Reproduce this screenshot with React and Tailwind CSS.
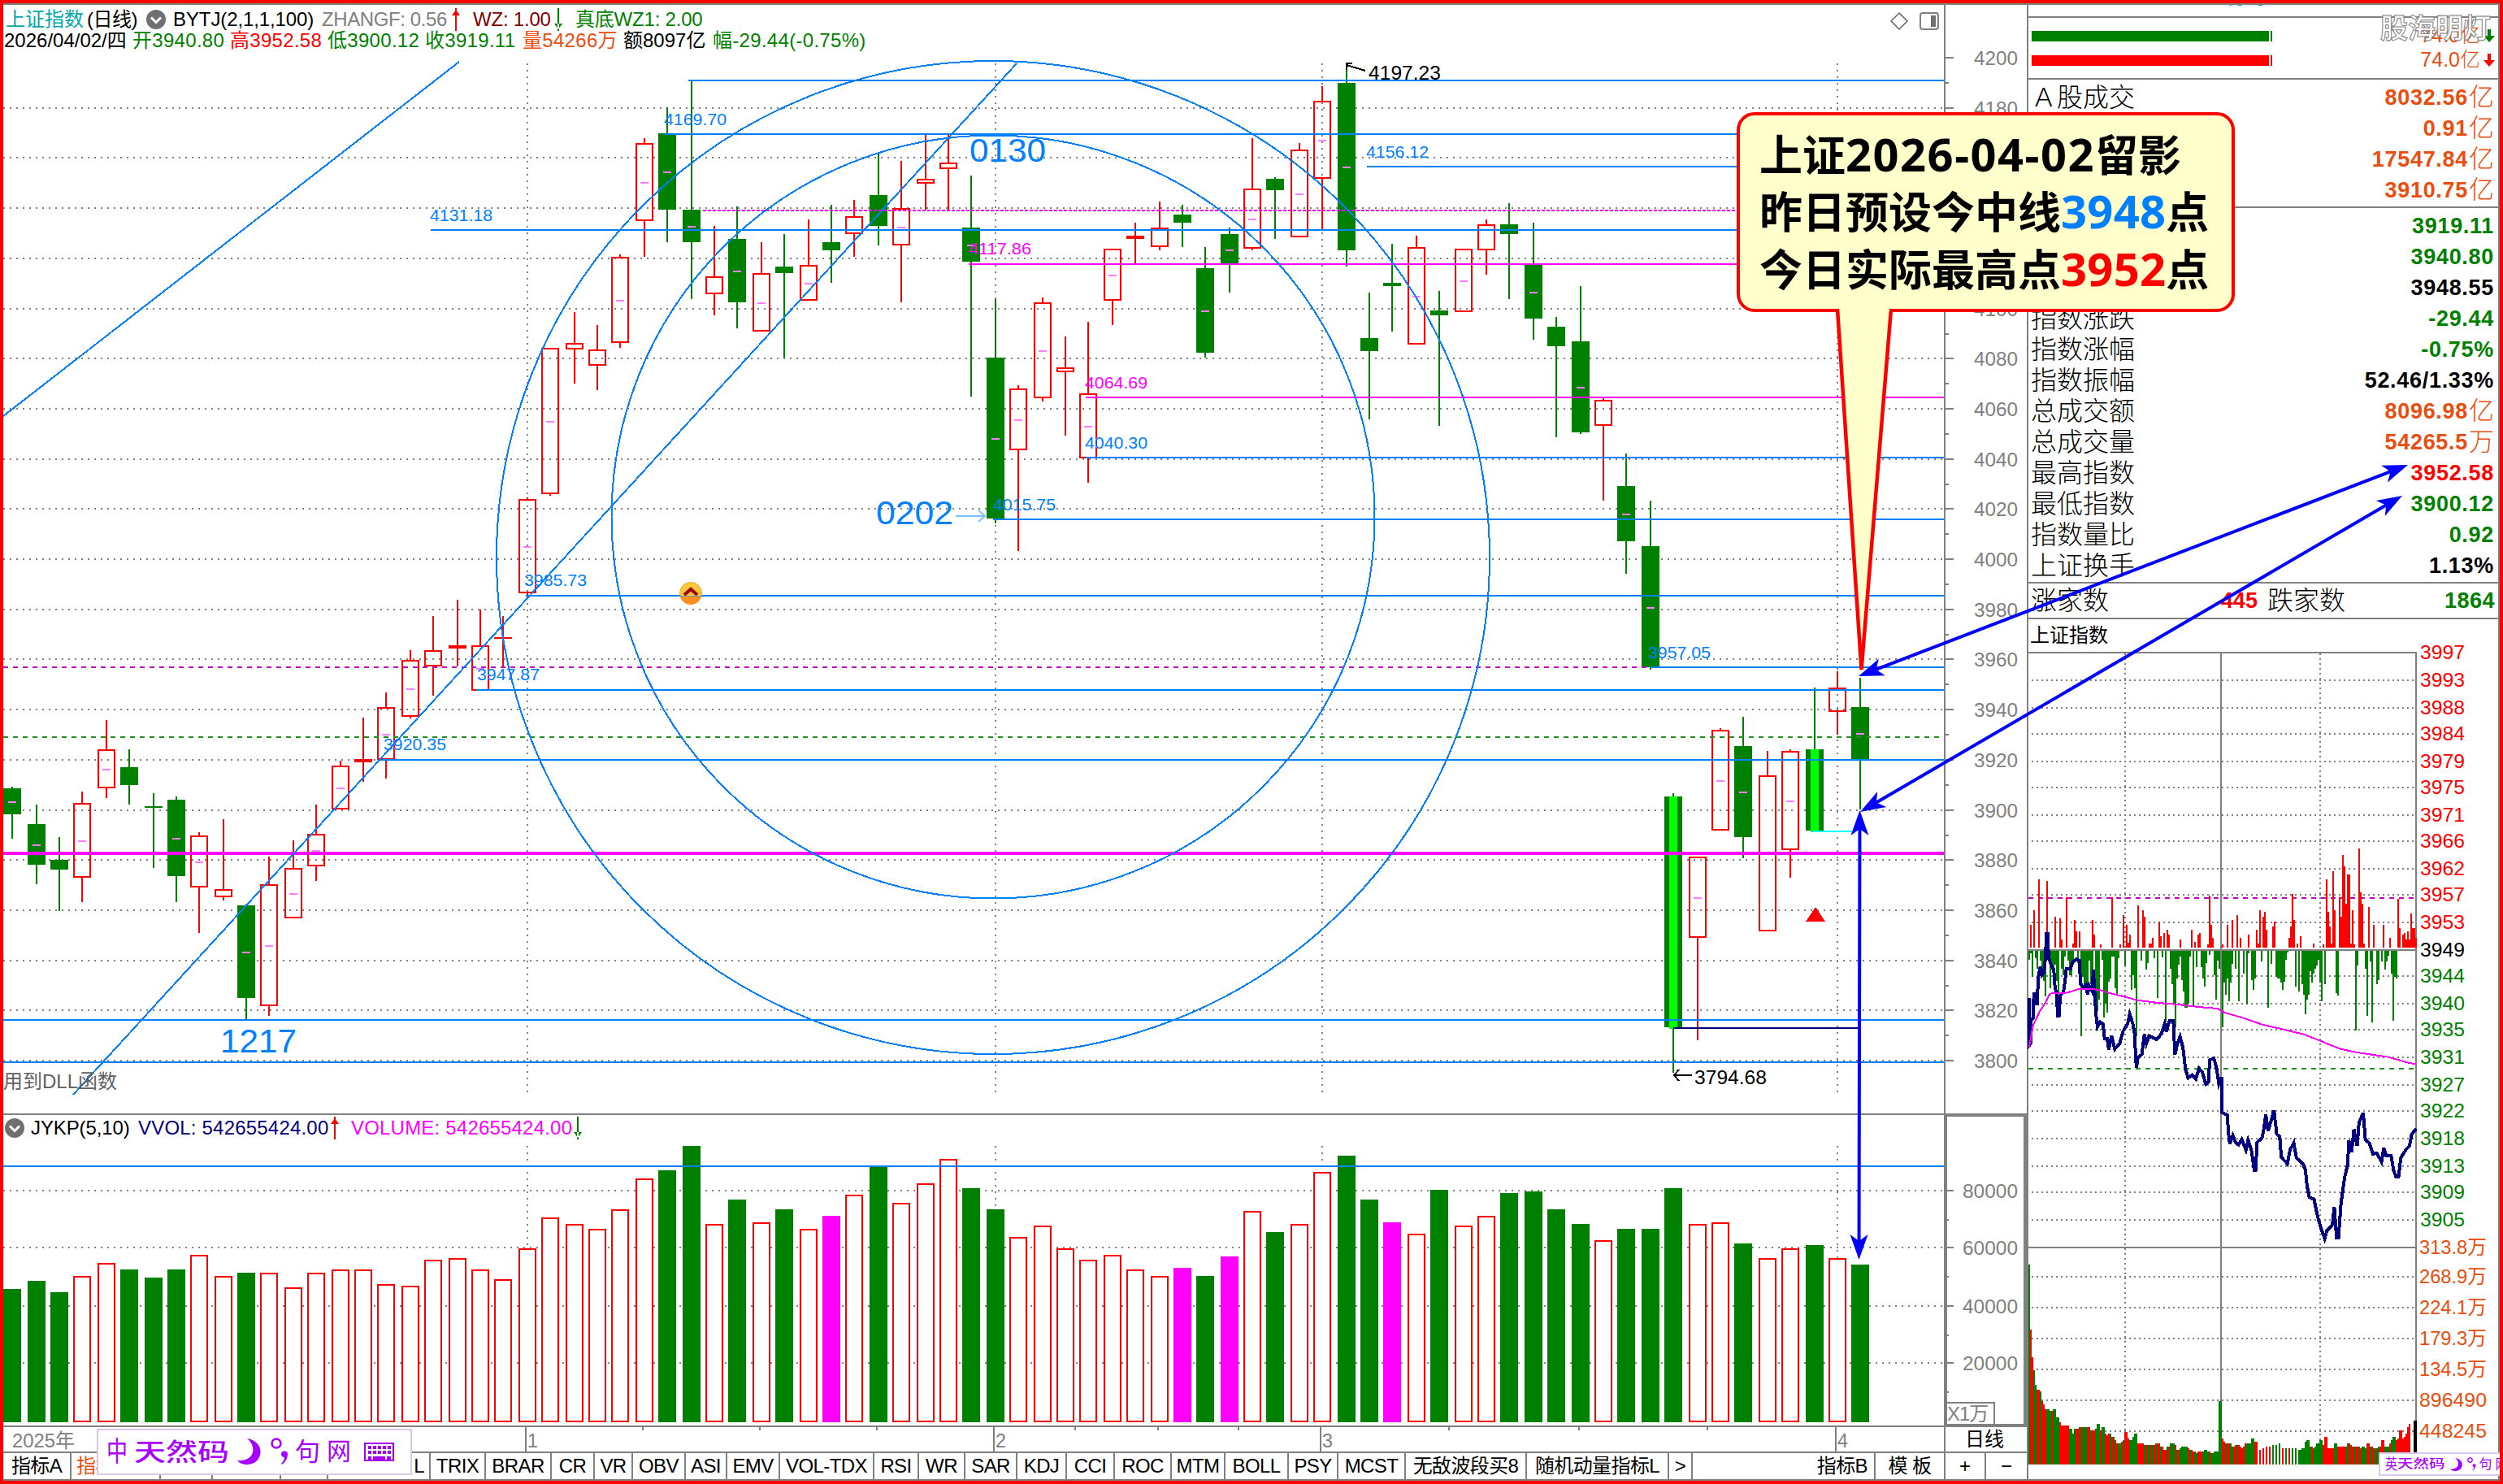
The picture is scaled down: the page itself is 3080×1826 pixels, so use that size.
import { clsx } from 'clsx';

const GRAY = '#808080';
const GREEN = '#008000';
const RED = '#ff0000';
const BLUE = '#0080ff';
const PINK = '#ff00ff';
const NAVY = '#000080';
const ORANGE = '#e84e0f';

const SANS = '"Liberation Sans", "Noto Sans CJK SC", sans-serif';

// [direction, high, body top, body bottom, low, middle mark]
const candles = [
  ['d', 968, 970, 1002, 1032, 1], ['d', 990, 1014, 1064, 1088, 1], ['d', 1030, 1058, 1070, 1121, 0],
  ['u', 974, 988, 1080, 1110, 1], ['u', 886, 922, 970, 982, 1], ['d', 922, 944, 966, 990, 0],
  ['d', 976, 992, 994, 1068, 0], ['d', 980, 984, 1078, 1110, 1], ['u', 1024, 1028, 1092, 1148, 1],
  ['u', 1008, 1094, 1104, 1108, 0], ['d', 1112, 1114, 1228, 1254, 1], ['u', 1054, 1088, 1238, 1250, 1],
  ['u', 1034, 1068, 1130, 1130, 1], ['u', 990, 1026, 1066, 1084, 1], ['u', 936, 942, 996, 996, 1],
  ['u', 883, 934, 938, 962, 0], ['u', 852, 870, 935, 958, 1], ['u', 800, 812, 882, 884, 1],
  ['u', 758, 800, 820, 856, 0], ['u', 738, 794, 798, 820, 0], ['u', 750, 794, 850, 850, 1],
  ['u', 758, 784, 786, 822, 0], ['u', 612, 614, 730, 736, 1], ['u', 428, 428, 608, 610, 1],
  ['u', 384, 422, 430, 472, 0], ['u', 400, 430, 450, 480, 0], ['u', 313, 316, 422, 428, 1],
  ['u', 170, 176, 272, 316, 1], ['d', 132, 164, 258, 298, 1], ['d', 99, 258, 298, 368, 1],
  ['u', 278, 340, 362, 388, 0], ['d', 254, 294, 372, 404, 1], ['u', 298, 336, 408, 408, 1],
  ['d', 288, 328, 336, 440, 0], ['u', 270, 326, 370, 370, 1], ['d', 252, 298, 308, 348, 0],
  ['u', 246, 266, 288, 316, 0], ['d', 189, 240, 278, 302, 0], ['u', 198, 256, 302, 372, 1],
  ['u', 166, 220, 226, 258, 0], ['u', 166, 200, 208, 258, 0], ['d', 216, 280, 322, 488, 1],
  ['d', 368, 440, 638, 644, 1], ['u', 474, 478, 554, 678, 1], ['u', 366, 372, 490, 494, 1],
  ['u', 414, 452, 458, 536, 0], ['u', 396, 484, 564, 594, 1], ['u', 306, 306, 370, 400, 1],
  ['u', 274, 290, 294, 325, 0], ['u', 248, 280, 304, 308, 0], ['d', 252, 264, 274, 304, 0],
  ['d', 304, 330, 434, 440, 1], ['d', 280, 288, 325, 360, 1], ['u', 170, 232, 306, 308, 1],
  ['d', 218, 220, 234, 294, 0], ['u', 176, 184, 292, 292, 1], ['u', 106, 124, 220, 283, 1],
  ['d', 84, 102, 308, 328, 1], ['d', 360, 416, 432, 516, 0], ['d', 300, 348, 352, 408, 0],
  ['u', 290, 304, 424, 424, 1], ['d', 358, 382, 388, 524, 0], ['u', 306, 306, 384, 384, 1],
  ['u', 270, 276, 308, 338, 0], ['d', 250, 276, 288, 368, 0], ['d', 274, 325, 392, 418, 1],
  ['d', 390, 402, 426, 538, 0], ['d', 352, 420, 532, 534, 1], ['u', 489, 492, 524, 616, 0],
  ['d', 558, 598, 666, 706, 1], ['d', 616, 672, 821, 824, 1], ['x', 976, 980, 1264, 1320, 0],
  ['u', 1054, 1054, 1154, 1280, 1], ['u', 896, 898, 1022, 1022, 1], ['d', 882, 918, 1030, 1056, 1],
  ['u', 924, 954, 1146, 1146, 0], ['u', 922, 924, 1046, 1080, 1], ['x', 846, 922, 1022, 1024, 0],
  ['u', 826, 846, 876, 904, 0], ['d', 834, 870, 934, 996, 1],
];

// volume bar tops, one for each candle
const volumes = [
  1586, 1576, 1590, 1570, 1554, 1562, 1572, 1562, 1544, 1570, 1566, 1566, 1584, 1566, 1562, 1562,
  1580, 1582, 1550, 1548, 1562, 1574, 1536, 1498, 1506, 1512, 1488, 1450, 1440, 1410, 1506, 1476,
  1504, 1488, 1512, 1496, 1470, 1436, 1480, 1456, 1426, 1462, 1488, 1522, 1508, 1536, 1550, 1544,
  1562, 1570, 1560, 1570, 1546, 1490, 1516, 1506, 1442, 1422, 1476, 1504, 1518, 1464, 1508, 1496,
  1468, 1466, 1488, 1506, 1526, 1512, 1512, 1462, 1506, 1504, 1530, 1548, 1536, 1532, 1548, 1556,
];
const volumeColors =
  'GGGRRGGGRRGRRRRRRRRRRRRRRRRRGGRGRGRMRGRRRGGRRRRRRRMGMRGRRGGMRGRRGGGGRGGGRRGRRGRG';

const candleX = (i) => Math.round((14.3 + i * 28.79) / 2) * 2 + 1;
const months = [649, 1225, 1627, 2261];

const levels = [
  { y: 99, x: 847 },
  { y: 165, x: 818, label: '4169.70', lx: 817, ly: 154 },
  { y: 283, x: 530, label: '4131.18', lx: 529, ly: 272 },
  { y: 205, x: 1682, label: '4156.12', lx: 1681, ly: 194 },
  { y: 325, x: 1192, label: '4117.86', lx: 1192, ly: 313, pink: true },
  { y: 489, x: 1336, label: '4064.69', lx: 1335, ly: 478, pink: true },
  { y: 563, x: 1336, label: '4040.30', lx: 1335, ly: 552 },
  { y: 639, x: 1222, label: '4015.75', lx: 1222, ly: 628 },
  { y: 733, x: 647, label: '3985.73', lx: 645, ly: 721 },
  { y: 849, x: 586, label: '3947.87', lx: 587, ly: 837 },
  { y: 935, x: 470, label: '3920.35', lx: 472, ly: 923 },
  { y: 821, x: 2031, label: '3957.05', lx: 2028, ly: 810 },
  { y: 1255, x: 4 },
  { y: 1307, x: 4 },
];

const priceTicks = Array.from({ length: 21 }, (_, i) => 4200 - i * 20);
const priceY = (p) => 71 + (4200 - p) * 3.085;

function Candle({ i, data }) {
  const [kind, high, top, bottom, low, mark] = data;
  const x = candleX(i);
  const up = kind === 'u';
  const color = up ? RED : GREEN;
  const h = Math.max(bottom - top, 2);
  return (
    <g>
      <rect x={x - 1} y={high} width="2" height={top - high} fill={color} />
      <rect x={x - 1} y={bottom} width="2" height={low - bottom} fill={color} />
      {up && h > 4 ? (
        <rect x={x - 10} y={top + 1} width="20" height={h - 2} fill="none" stroke={RED} strokeWidth="2" />
      ) : (
        <rect x={x - 11} y={top} width="22" height={h} fill={color} />
      )}
      {kind === 'x' && <rect x={x - 5} y={top} width="10" height={h + 2} fill="#00ff00" />}
      {mark === 1 && (
        <rect x={x - 5} y={(top + bottom) / 2} width="10" height="2" fill="#ff80ff" />
      )}
    </g>
  );
}

function Label({ x, y, w, size = 24, fill = GRAY, children }) {
  return (
    <text x={x} y={y} fontSize={size} fill={fill} textLength={w} lengthAdjust="spacingAndGlyphs">
      {children}
    </text>
  );
}

function PriceChart() {
  return (
    <svg width="2388" height="1306" viewBox="4 64 2388 1306" fontFamily={SANS} shapeRendering="crispEdges">
      {priceTicks.slice(1).map((p) => (
        <line key={p} x1="4" x2="2392" y1={Math.round(priceY(p))} y2={Math.round(priceY(p))} stroke={GRAY} strokeWidth="2" strokeDasharray="2 6" />
      ))}
      {months.map((x) => (
        <line key={x} x1={x} x2={x} y1="78" y2="1345" stroke={GRAY} strokeWidth="2" strokeDasharray="2 6" />
      ))}
      {candles.map((c, i) => (
        <Candle key={i} i={i} data={c} />
      ))}
      <line x1="4" x2="2026" y1="821" y2="821" stroke="#c000c0" strokeWidth="2" strokeDasharray="6 6" />
      <line x1="4" x2="2392" y1="907" y2="907" stroke="#209020" strokeWidth="2" strokeDasharray="6 6" />
      <line x1="865" x2="2392" y1="259" y2="259" stroke={PINK} strokeWidth="2" strokeDasharray="4 2" />
      <line x1="4" x2="2392" y1="1050" y2="1050" stroke={PINK} strokeWidth="4" />
      {levels.map((l) => (
        <g key={l.y}>
          <line x1={l.x} x2="2392" y1={l.y} y2={l.y} stroke={l.pink ? PINK : BLUE} strokeWidth="2" />
          {l.label && (
            <Label x={l.lx} y={l.ly} w={77} size={21} fill={l.pink ? PINK : BLUE}>
              {l.label}
            </Label>
          )}
        </g>
      ))}
      <line x1="2059" x2="2287" y1="1265" y2="1265" stroke={NAVY} strokeWidth="2" />
      <line x1="2230" x2="2280" y1="1023" y2="1023" stroke="#00ffff" strokeWidth="2" />
      <g fill="none" stroke={BLUE} strokeWidth="2">
        <circle cx="1222" cy="686" r="611" />
        <circle cx="1222" cy="636" r="469.5" />
        <line x1="4" y1="512" x2="565" y2="76" />
        <line x1="90" y1="1347" x2="1251" y2="78" />
      </g>
      <path d="M2234 1116L2246 1134H2222Z" fill={RED} />

      {/* sell signal */}
      <g shapeRendering="auto">
        <circle cx="850" cy="730" r="13.5" fill="#ffc83c" stroke="#f0a020" />
        <path d="M838 734a12 10 0 0 0 24 0Z" fill="#ff9020" />
        <path d="M842 732l8-7 8 7" fill="none" stroke="#a00000" strokeWidth="4" />
      </g>
      <line x1="837" x2="863" y1="733" y2="733" stroke={BLUE} strokeWidth="1" opacity="0.6" />

      <Label x={1193} y={199} w={94} size={40} fill={BLUE}>0130</Label>
      <Label x={1078} y={645} w={95} size={40} fill={BLUE}>0202</Label>
      <Label x={271} y={1295} w={94} size={40} fill={BLUE}>1217</Label>
      <path d="M1176 635H1211M1204 628L1212 635L1204 642" fill="none" stroke="#80c0ff" strokeWidth="2" shapeRendering="auto" />

      <Label x={1684} y={98} w={89} fill="#000">4197.23</Label>
      <path d="M1680 87L1657 80M1657 86V78H1664" fill="none" stroke="#000" strokeWidth="2" />
      <Label x={2085} y={1334} w={89} fill="#000">3794.68</Label>
      <path d="M2082 1323H2060M2066 1316L2060 1323L2066 1330" fill="none" stroke="#000" strokeWidth="2" />
      <Label x={4} y={1339} w={140} fill="#606060">用到DLL函数</Label>
    </svg>
  );
}

function PriceAxis() {
  return (
    <svg width="100" height="1364" viewBox="2394 6 100 1364" fontFamily={SANS} shapeRendering="crispEdges">
      {priceTicks.map((p) => {
        const y = Math.round(priceY(p));
        return (
          <g key={p}>
            <rect x="2394" y={y - 1} width="10" height="2" fill={GRAY} />
            {p > 3800 && <rect x="2394" y={y + 30} width="4" height="2" fill={GRAY} />}
            <Label x={2429} y={y + 9} w={54}>{p}</Label>
          </g>
        );
      })}
    </svg>
  );
}

const volumeTicks = [
  [80000, 1465],
  [60000, 1535],
  [40000, 1607],
  [20000, 1677],
];

function VolumeChart() {
  return (
    <svg width="2388" height="348" viewBox="4 1406 2388 348" shapeRendering="crispEdges">
      {volumeTicks.map(([v, y]) => (
        <line key={v} x1="4" x2="2392" y1={y} y2={y} stroke={GRAY} strokeWidth="2" strokeDasharray="2 6" />
      ))}
      {months.map((x) => (
        <line key={x} x1={x} x2={x} y1="1410" y2="1750" stroke={GRAY} strokeWidth="2" strokeDasharray="2 6" />
      ))}
      {volumes.map((top, i) => {
        const x = candleX(i);
        const c = volumeColors[i];
        if (c === 'R') {
          return (
            <rect key={i} x={x - 10} y={top + 1} width="20" height={1748 - top} fill="#fff" stroke={RED} strokeWidth="2" />
          );
        }
        return <rect key={i} x={x - 11} y={top} width="22" height={1750 - top} fill={c === 'G' ? GREEN : PINK} />;
      })}
      <line x1="4" x2="2392" y1="1435" y2="1435" stroke={BLUE} strokeWidth="2" />
    </svg>
  );
}

function VolumeAxis() {
  return (
    <div className="box-border flex h-[386px] w-[102px] flex-col border-4 border-[#808080]">
      <svg width="94" height="351" viewBox="2396 1374 94 351" fontFamily={SANS} shapeRendering="crispEdges">
        {volumeTicks.map(([v, y]) => (
          <g key={v}>
            <rect x="2396" y={y - 1} width="8" height="2" fill={GRAY} />
            <rect x="2396" y={y + 35} width="2" height="2" fill={GRAY} />
            <Label x={2415} y={y + 9} w={68}>{v}</Label>
          </g>
        ))}
      </svg>
      <div className="flex h-[27px] w-[59px] items-center overflow-hidden border-t-2 border-r-2 border-[#808080] text-2xl leading-none tracking-[-1px] text-[#808080]">
        X1万
      </div>
    </div>
  );
}

function DropIcon() {
  return (
    <svg className="shrink-0" width="24" height="24" viewBox="0 0 24 24">
      <circle cx="12" cy="12" r="12" fill="#707070" />
      <path d="M6 9.500L12 15.500L18 9.500" fill="none" stroke="#fff" strokeWidth="3" />
    </svg>
  );
}

function Trend({ up }) {
  return up ? (
    <svg className="shrink-0" width="20" height="28" viewBox="0 0 20 28">
      <path d="M9 0h2v28H9zM5 9L10 2L15 9z" fill={RED} />
    </svg>
  ) : (
    <svg className="shrink-0" width="20" height="28" viewBox="0 0 20 28">
      <path d="M9 0h2v28H9zM5 19L10 26L15 19z" fill={GREEN} />
    </svg>
  );
}

function ChartHeader() {
  return (
    <div className="flex h-[58px] flex-col whitespace-nowrap text-2xl leading-none">
      <div className="flex h-8 items-center pt-1 pl-[3px]">
        <span className="w-[100px] text-[#00a8a8]">上证指数</span>
        <span className="w-[73px] tracking-[-0.5px]">(日线)</span>
        <DropIcon />
        <span className="ml-[9px] w-[183px] tracking-[-0.1px]">BYTJ(2,1,1,100)</span>
        <span className="w-[155px] tracking-[-0.400px] text-[#808080]">ZHANGF: 0.56</span>
        <Trend up />
        <span className="ml-[11px] w-[95px] tracking-[-0.2px] text-[#800000]">WZ: 1.00</span>
        <Trend />
        <span className="ml-[11px] tracking-[-0.2px] text-[#008000]">真底WZ1: 2.00</span>
      </div>
      <div className="flex h-6 items-center pl-[1px]">
        <span className="w-[158px]">2026/04/02/四</span>
        <span className="w-[120px] tracking-[0.3px] text-[#008000]">开3940.80</span>
        <span className="w-[120px] tracking-[0.3px] text-[#ff0000]">高3952.58</span>
        <span className="w-[120px] tracking-[0.3px] text-[#008000]">低3900.12</span>
        <span className="w-[120px] tracking-[0.3px] text-[#008000]">收3919.11</span>
        <span className="w-[124px] tracking-[0.3px] text-[#e84e0f]">量54266万</span>
        <span className="w-[110px]">额8097亿</span>
        <span className="tracking-[0.3px] text-[#008000]">幅-29.44(-0.75%)</span>
      </div>
    </div>
  );
}

function VolumeHeader() {
  return (
    <div className="flex h-[34px] items-center whitespace-nowrap pb-[2px] pl-[2px] text-2xl leading-none">
      <DropIcon />
      <span className="ml-2 w-[132px] tracking-[-0.1px]">JYKP(5,10)</span>
      <span className="w-[232px] tracking-[0.2px] text-[#000080]">VVOL: 542655424.00</span>
      <Trend up />
      <span className="ml-[10px] w-[269px] tracking-[0.2px] text-[#ff00ff]">VOLUME: 542655424.00</span>
      <Trend />
    </div>
  );
}

function TimeAxis() {
  const minor = [791, 935, 1079, 1323, 1425, 1524, 1783, 1943, 2101];
  return (
    <svg width="2388" height="30" viewBox="4 1756 2388 30" fontFamily={SANS} shapeRendering="crispEdges">
      <Label x={15} y={1781} w={77}>2025年</Label>
      {months.map((x, i) => (
        <g key={x}>
          <rect x={x - 3} y="1756" width="2" height="30" fill={GRAY} />
          <Label x={x} y={1781} w={13}>{i + 1}</Label>
        </g>
      ))}
      {minor.map((x) => (
        <rect key={x} x={x - 1} y="1756" width="2" height="4" fill={GRAY} />
      ))}
    </svg>
  );
}

const tabs = [
  ['指标A', 'w-[84px]'], ['指标', 'w-[110px]', 'text-[#e84e0f] justify-start pl-1.5'], ['', 'w-[64px]'], ['', 'w-[84px]'], ['', 'w-[58px]'],
  ['L', 'w-[126px]', 'justify-end pr-1.5'], ['TRIX', 'w-[68px]'], ['BRAR', 'w-[81px]'], ['CR', 'w-[53px]'],
  ['VR', 'w-[47px]'], ['OBV', 'w-[65px]'], ['ASI', 'w-[51px]'], ['EMV', 'w-[65px]'], ['VOL-TDX', 'w-[116px]'],
  ['RSI', 'w-[55px]'], ['WR', 'w-[57px]'], ['SAR', 'w-[64px]'], ['KDJ', 'w-[61px]'], ['CCI', 'w-[59px]'],
  ['ROC', 'w-[70px]'], ['MTM', 'w-[66px]'], ['BOLL', 'w-[78px]'], ['PSY', 'w-[61px]'], ['MCST', 'w-[83px]'],
  ['无敌波段买8', 'w-[149px]'], ['随机动量指标L', 'w-[175px]'], ['>', 'w-[29px]'],
];

function IndicatorTabs() {
  return (
    <div className="flex h-8 whitespace-nowrap text-2xl leading-none tracking-[-0.6px]">
      {tabs.map(([name, width, extra], i) => (
        <div key={i} className={clsx('flex shrink-0 items-center border-r-2 border-[#808080]', width, extra || 'justify-center')}>
          {name}
        </div>
      ))}
      <div className="flex flex-1 items-center justify-end border-r-2 border-[#808080] pr-2">指标B</div>
      <div className="flex w-[84px] items-center justify-center">模 板</div>
    </div>
  );
}

const quotes = [
  ['', '3919.11', 'text-[#008000]'],
  ['', '3940.80', 'text-[#008000]'],
  ['', '3948.55', 'text-black'],
  ['指数涨跌', '-29.44', 'text-[#008000]'],
  ['指数涨幅', '-0.75%', 'text-[#008000]'],
  ['指数振幅', '52.46/1.33%', 'text-black'],
  ['总成交额', '8096.98', 'text-[#e84e0f]', '亿'],
  ['总成交量', '54265.5', 'text-[#e84e0f]', '万'],
  ['最高指数', '3952.58', 'text-[#ff0000]'],
  ['最低指数', '3900.12', 'text-[#008000]'],
  ['指数量比', '0.92', 'text-[#008000]'],
  ['上证换手', '1.13%', 'text-black'],
];

const turnover = [
  ['Ａ股成交', '8032.56', 'text-[#e84e0f]', '亿'],
  ['', '0.91', 'text-[#e84e0f]', '亿'],
  ['', '17547.84', 'text-[#e84e0f]', '亿'],
  ['', '3910.75', 'text-[#e84e0f]', '亿'],
];

function QuoteRow({ row }) {
  const [name, value, color, unit] = row;
  return (
    <div className="flex h-[38px] items-center justify-between pr-[5px] pl-[3px]">
      <span className="text-[32px] font-light">{name}</span>
      <span className={clsx('flex items-center', color)}>
        <b className="text-[27px] tracking-[0.7px]">{value}</b>
        {unit && <span className="ml-px text-[31px] font-light">{unit}</span>}
      </span>
    </div>
  );
}

function FlowBar({ fill, arrow }) {
  return (
    <div className="flex h-[30px] items-center pl-1">
      <div className={clsx('h-[13px] w-[292px]', fill)} />
      <div className={clsx('ml-[2px] h-[13px] w-[2px]', fill)} />
      <span className="ml-auto text-[25px] font-light text-[#e84e0f]">74.0亿</span>
      <svg className="mr-1 ml-1" width="14" height="18" viewBox="0 0 14 18">
        <path d="M5 1h4v8h5l-7 8-7-8h5z" fill={arrow} />
      </svg>
    </div>
  );
}

// the intraday lists hold positions on a finer grid than the panel's pixels
const mx = (v) => v / 2.529 + 2460;
const my = (v) => v / 2.063 + 780;

const inflow = [
  98, 739, 108, 701, 123, 623, 149, 627, 174, 718, 190, 722, 195, 776, 209, 668, 230, 787, 235, 726, 240, 755,
  250, 755, 290, 726, 295, 763, 316, 789, 351, 668, 378, 789, 386, 714, 397, 739, 402, 783, 407, 763, 432, 689,
  447, 701, 452, 718, 468, 785, 473, 785, 478, 772, 498, 730, 504, 767, 514, 759, 523, 751, 528, 763, 564, 776,
  600, 751, 609, 781, 619, 763, 625, 759, 650, 789, 655, 664, 660, 739, 665, 772, 695, 789, 710, 739, 725, 726,
  740, 714, 751, 772, 776, 763, 801, 751, 806, 785, 811, 701, 821, 718, 827, 706, 832, 751, 852, 743, 857, 730,
  902, 772, 907, 743, 913, 660, 918, 726, 928, 785, 938, 767, 978, 785, 1009, 789, 1020, 623, 1025, 706, 1030, 743,
  1035, 785, 1040, 602, 1045, 701, 1060, 668, 1065, 718, 1070, 561, 1075, 590, 1080, 685, 1085, 611, 1090, 611,
  1095, 785, 1101, 701, 1106, 789, 1120, 545, 1125, 656, 1130, 685, 1135, 785, 1151, 693, 1165, 739, 1196, 739,
  1216, 772, 1241, 673, 1246, 747, 1257, 763, 1262, 759, 1267, 776, 1272, 755, 1277, 776, 1283, 710, 1288, 747,
  1293, 747, 1297, 772,
];

const outflow = [
  93, 828, 98, 810, 103, 870, 113, 824, 118, 849, 128, 830, 133, 870, 139, 880, 144, 920, 154, 830, 159, 899,
  164, 845, 169, 870, 174, 840, 179, 880, 184, 911, 194, 849, 200, 866, 205, 820, 215, 830, 220, 866, 225, 866,
  230, 830, 245, 835, 255, 1022, 260, 870, 265, 895, 270, 890, 275, 890, 280, 830, 285, 890, 290, 895, 300, 911,
  305, 957, 311, 928, 321, 828, 326, 974, 331, 936, 336, 961, 341, 882, 346, 874, 351, 820, 356, 820, 361, 899,
  366, 915, 371, 824, 391, 841, 412, 903, 417, 866, 422, 899, 427, 1022, 442, 830, 457, 853, 462, 835, 483, 824,
  493, 924, 508, 822, 518, 986, 533, 849, 538, 890, 543, 936, 548, 998, 553, 874, 558, 840, 563, 820, 568, 878,
  573, 907, 578, 948, 583, 948, 588, 936, 594, 820, 604, 944, 614, 845, 629, 845, 634, 874, 639, 895, 645, 835,
  655, 815, 670, 866, 675, 928, 680, 830, 685, 849, 690, 900, 695, 998, 700, 886, 705, 915, 710, 874, 715, 932,
  720, 886, 725, 837, 735, 849, 746, 932, 761, 862, 771, 940, 776, 810, 786, 878, 791, 903, 796, 874, 817, 832,
  837, 948, 847, 837, 862, 870, 867, 874, 872, 874, 877, 886, 882, 903, 887, 882, 892, 828, 897, 808, 922, 895,
  933, 907, 943, 890, 948, 915, 953, 965, 958, 928, 963, 915, 968, 857, 973, 886, 978, 862, 983, 849, 988, 841,
  993, 828, 998, 886, 1003, 932, 1014, 890, 1050, 911, 1055, 919, 1110, 1006, 1115, 841, 1141, 849, 1146, 969,
  1156, 832, 1161, 986, 1176, 890, 1181, 878, 1191, 832, 1201, 853, 1206, 832, 1211, 816, 1221, 862, 1226, 981,
  1231, 870, 1236, 874,
];

const indexLine = [
  93, 925, 94, 1044, 98, 1040, 99, 980, 106, 975, 108, 910, 113, 938, 118, 938, 122, 872, 128, 845, 133, 866,
  139, 860, 144, 824, 147, 762, 151, 762, 154, 822, 164, 845, 170, 852, 174, 900, 179, 910, 182, 970, 186, 970,
  190, 918, 200, 910, 205, 882, 209, 849, 222, 849, 230, 832, 240, 826, 250, 830, 253, 888, 262, 897, 270, 890,
  275, 915, 280, 893, 290, 908, 293, 852, 297, 905, 301, 962, 306, 998, 314, 985, 323, 990, 328, 1027, 336, 1027,
  341, 1055, 350, 1020, 360, 1054, 375, 1040, 386, 1008, 400, 990, 406, 965, 416, 990, 421, 1012, 427, 1102,
  432, 1075, 444, 1068, 452, 1015, 458, 1040, 467, 1020, 490, 1030, 505, 1015, 515, 990, 520, 1010, 530, 982,
  542, 982, 547, 1068, 555, 1040, 563, 1022, 572, 1050, 580, 1105, 588, 1127, 600, 1120, 612, 1130, 622, 1103,
  632, 1112, 643, 1143, 652, 1137, 655, 1082, 668, 1077, 676, 1100, 684, 1142, 692, 1125, 693, 1215, 710, 1222,
  714, 1270, 718, 1295, 727, 1273, 735, 1290, 745, 1297, 755, 1283, 768, 1310, 775, 1285, 785, 1310, 794, 1362,
  798, 1362, 803, 1290, 818, 1280, 823, 1260, 830, 1220, 837, 1262, 845, 1240, 855, 1209, 864, 1270, 873, 1276,
  878, 1328, 897, 1345, 905, 1310, 917, 1292, 925, 1330, 945, 1345, 953, 1360, 958, 1400, 965, 1430, 980, 1435,
  990, 1475, 1000, 1505, 1013, 1535, 1020, 1515, 1037, 1500, 1043, 1455, 1050, 1533, 1056, 1533, 1064, 1445,
  1075, 1380, 1085, 1345, 1088, 1285, 1097, 1315, 1104, 1258, 1114, 1300, 1120, 1240, 1133, 1216, 1140, 1285,
  1152, 1292, 1163, 1320, 1175, 1318, 1190, 1340, 1197, 1305, 1205, 1325, 1220, 1325, 1227, 1360, 1235, 1378,
  1243, 1378, 1250, 1330, 1265, 1310, 1277, 1300, 1284, 1270, 1298, 1256,
];

const averageLine = [
  93, 1050, 98, 1030, 105, 995, 125, 960, 145, 935, 155, 917, 165, 911, 210, 911, 250, 901, 310, 903, 340, 911,
  390, 921, 430, 930, 500, 937, 560, 941, 620, 947, 680, 951, 700, 961, 760, 975, 820, 992, 880, 1003, 950, 1017,
  1000, 1033, 1060, 1053, 1110, 1062, 1210, 1074, 1280, 1090, 1298, 1091,
];

const minuteVolume = [
  [262, 168, 'G'], [266, 408, 'R'], [270, 510, 'R'], [275, 558, 'G'], [280, 612, 'G'], [284, 630, 'R'], [289, 630, 'R'],
  [293, 636, 'G'], [298, 672, 'R'], [302, 684, 'R'], [307, 702, 'R'], [311, 702, 'G'], [316, 702, 'G'], [320, 708, 'G'],
  [325, 708, 'R'], [329, 702, 'G'], [334, 702, 'G'], [338, 732, 'G'], [343, 732, 'G'], [347, 750, 'R'], [352, 762, 'R'],
  [356, 762, 'R'], [361, 762, 'R'], [365, 762, 'R'], [370, 762, 'R'], [374, 774, 'G'], [379, 774, 'G'], [383, 792, 'G'],
  [388, 774, 'G'], [392, 774, 'R'], [397, 774, 'R'], [401, 768, 'G'], [406, 768, 'R'], [410, 768, 'G'], [415, 768, 'G'],
  [419, 768, 'G'], [424, 768, 'R'], [428, 768, 'R'], [433, 780, 'G'], [437, 780, 'R'], [442, 780, 'R'], [446, 774, 'G'],
  [450, 756, 'G'], [455, 756, 'G'], [459, 780, 'R'], [464, 768, 'G'], [468, 768, 'G'], [473, 792, 'R'], [477, 798, 'R'],
  [482, 792, 'R'], [486, 792, 'G'], [491, 804, 'R'], [495, 804, 'G'], [500, 816, 'R'], [504, 828, 'R'], [509, 828, 'G'],
  [513, 828, 'G'], [518, 822, 'R'], [522, 816, 'G'], [527, 786, 'R'], [531, 786, 'R'], [536, 810, 'R'], [540, 816, 'G'],
  [545, 816, 'G'], [549, 804, 'G'], [554, 792, 'G'], [558, 792, 'G'], [563, 828, 'R'], [567, 828, 'R'], [572, 828, 'R'],
  [576, 828, 'R'], [581, 834, 'G'], [585, 834, 'R'], [590, 834, 'G'], [594, 834, 'G'], [599, 834, 'R'], [603, 834, 'G'],
  [608, 834, 'R'], [612, 828, 'G'], [617, 828, 'R'], [621, 828, 'R'], [626, 840, 'G'], [630, 840, 'R'], [635, 852, 'R'],
  [639, 852, 'R'], [644, 840, 'G'], [648, 840, 'R'], [653, 828, 'G'], [657, 828, 'G'], [662, 828, 'G'], [666, 834, 'R'],
  [671, 852, 'G'], [675, 852, 'R'], [680, 846, 'G'], [684, 840, 'G'], [689, 840, 'G'], [693, 840, 'G'], [698, 840, 'G'],
  [702, 846, 'R'], [707, 852, 'G'], [711, 852, 'R'], [716, 858, 'R'], [720, 858, 'G'], [725, 864, 'G'], [729, 858, 'R'],
  [734, 858, 'R'], [738, 858, 'R'], [743, 858, 'G'], [747, 852, 'G'], [752, 852, 'G'], [756, 858, 'G'], [761, 858, 'R'],
  [765, 864, 'G'], [770, 864, 'G'], [774, 858, 'G'], [779, 858, 'G'], [783, 858, 'G'], [788, 672, 'G'], [792, 672, 'G'],
  [797, 810, 'R'], [801, 822, 'R'], [806, 828, 'G'], [810, 828, 'R'], [815, 828, 'R'], [819, 828, 'G'], [824, 840, 'G'],
  [828, 840, 'R'], [833, 834, 'R'], [837, 834, 'G'], [842, 834, 'R'], [846, 840, 'R'], [851, 846, 'R'], [855, 840, 'G'],
  [860, 828, 'R'], [864, 828, 'G'], [869, 828, 'G'], [873, 828, 'G'], [878, 810, 'G'], [882, 810, 'G'], [887, 822, 'R'],
  [891, 822, 'R'], [896, 852, 'G'], [900, 852, 'R'], [905, 852, 'R'], [909, 846, 'R'], [914, 840, 'R'], [918, 840, 'R'],
  [923, 846, 'G'], [927, 840, 'R'], [932, 840, 'R'], [936, 834, 'G'], [941, 834, 'G'], [945, 834, 'G'], [950, 828, 'G'],
  [954, 828, 'G'], [959, 846, 'G'], [963, 846, 'R'], [968, 846, 'R'], [972, 846, 'G'], [977, 846, 'R'], [981, 846, 'R'],
  [986, 846, 'R'], [990, 846, 'G'], [995, 846, 'G'], [999, 846, 'G'], [1004, 852, 'G'], [1008, 852, 'G'], [1013, 846, 'G'],
  [1017, 846, 'G'], [1022, 822, 'G'], [1026, 816, 'G'], [1031, 816, 'G'], [1035, 840, 'G'], [1040, 840, 'R'], [1044, 846, 'G'],
  [1049, 840, 'G'], [1053, 828, 'G'], [1058, 828, 'G'], [1062, 816, 'G'], [1067, 816, 'G'], [1071, 834, 'R'], [1076, 804, 'R'],
  [1080, 804, 'R'], [1085, 846, 'R'], [1089, 846, 'R'], [1094, 846, 'R'], [1098, 846, 'R'], [1103, 828, 'G'], [1107, 828, 'G'],
  [1112, 840, 'R'], [1116, 840, 'R'], [1121, 840, 'R'], [1125, 840, 'R'], [1130, 840, 'R'], [1134, 840, 'G'], [1139, 828, 'R'],
  [1143, 828, 'G'], [1148, 834, 'R'], [1152, 840, 'R'], [1157, 840, 'G'], [1161, 840, 'R'], [1166, 840, 'R'], [1170, 840, 'G'],
  [1175, 846, 'R'], [1179, 840, 'G'], [1184, 840, 'G'], [1188, 846, 'G'], [1193, 828, 'R'], [1197, 828, 'R'], [1202, 840, 'G'],
  [1206, 840, 'R'], [1211, 846, 'G'], [1215, 846, 'R'], [1220, 846, 'G'], [1224, 840, 'G'], [1229, 840, 'R'], [1233, 816, 'R'],
  [1238, 816, 'R'], [1242, 840, 'G'], [1247, 840, 'G'], [1251, 840, 'G'], [1256, 828, 'R'], [1260, 816, 'G'], [1265, 804, 'G'],
  [1269, 804, 'G'], [1274, 816, 'R'], [1278, 810, 'R'], [1283, 780, 'R'], [1287, 780, 'R'], [1292, 810, 'R'], [1296, 804, 'R'],
  [1301, 792, 'R'], [1305, 768, 'R'], [1310, 756, 'R'],
];

const scale = [
  3997, 3993, 3988, 3984, 3979, 3975, 3971, 3966, 3962, 3957, 3953, 3949, 3944, 3940, 3935, 3931, 3927, 3922, 3918,
  3913, 3909, 3905,
];
const scaleY = [
  803, 837, 871, 903, 937, 969, 1003, 1035, 1069, 1101, 1135, 1169, 1201, 1235, 1267, 1301, 1335, 1367, 1401, 1435,
  1467, 1501,
];
const volumeScale = [
  ['313.8万', 1535], ['268.9万', 1571], ['224.1万', 1609], ['179.3万', 1647], ['134.5万', 1685], ['896490', 1723], ['448245', 1761],
];

const pairs = (list) => list.reduce((out, v, i) => (i % 2 ? out : [...out, [v, list[i + 1]]]), []);
const toPoints = (list) => pairs(list).map(([x, y]) => `${mx(x)},${my(y)}`).join(' ');
const snap = (v) => Math.round(v / 2) * 2;

function IntradayChart() {
  return (
    <svg className="overflow-visible" width="578" height="1018" viewBox="2496 802 578 1018" fontFamily={SANS} shapeRendering="crispEdges">
      <g stroke={GRAY} strokeWidth="2" strokeDasharray="2 4">
        {scaleY.filter((y) => y !== 803 && y !== 1169).map((y) => (
          <line key={y} x1="2500" x2="2972" y1={y} y2={y} />
        ))}
        {volumeScale.slice(1).map(([v, y]) => (
          <line key={v} x1="2500" x2="2972" y1={y} y2={y} />
        ))}
        <line x1="2615" x2="2615" y1="804" y2="1802" />
        <line x1="2855" x2="2855" y1="804" y2="1802" />
      </g>
      <line x1="2496" x2="2972" y1="1105" y2="1105" stroke="#c000c0" strokeWidth="2" strokeDasharray="6 6" />
      <line x1="2496" x2="2972" y1="1315" y2="1315" stroke="#209020" strokeWidth="2" strokeDasharray="6 6" />
      {pairs(outflow).map(([x, y]) => (
        <rect key={x} x={snap(mx(x) - 1)} y="1169" width="2" height={my(y) - 1169} fill={GREEN} />
      ))}
      <path d="M2496 803H2974M2496 1169H2974M2496 1535H2974M2733 803V1802M2973 803V1802" stroke={GRAY} strokeWidth="2" fill="none" />
      <line x1="2735" x2="2735" y1="1178" y2="1263" stroke={GREEN} strokeWidth="2" />
      {pairs(inflow).map(([x, y]) => (
        <rect key={x} x={snap(mx(x) - 1)} y={my(y)} width="2" height={1166 - my(y)} fill={RED} />
      ))}
      <polyline points={toPoints(indexLine)} fill="none" stroke={NAVY} strokeWidth="4" />
      <polyline points={toPoints(averageLine)} fill="none" stroke={PINK} strokeWidth="2" />
      {scale.map((v, i) => (
        <Label key={v} x={2978} y={scaleY[i] + 8} w={55} fill={v > 3949 ? RED : v < 3949 ? GREEN : '#000'}>
          {v}
        </Label>
      ))}
      {minuteVolume.map(([x, top, c]) => (
        <rect key={x} x={snap(x / 2.24 + 2379)} y={top / 3 + 1500} width="2" height={302 - top / 3} fill={c === 'G' ? GREEN : RED} />
      ))}
      <rect x="2970" y="1748" width="4" height="54" fill="#000" />
      {volumeScale.map(([v, y]) => (
        <Label key={v} x={2977} y={y + 8} w={83} fill={ORANGE}>
          {v}
        </Label>
      ))}
    </svg>
  );
}

function SidePanel() {
  return (
    <aside className="flex w-[580px] shrink-0 flex-col border-r-2 border-[#808080]">
      <div className="flex h-[14px] items-start justify-center overflow-hidden pr-[40px] text-2xl leading-none text-[#00a8a8]">
        <span className="-mt-[21px]">分时</span>
      </div>
      <div className="flex h-[76px] flex-col border-t-2 border-[#808080] pt-[7px]">
        <FlowBar fill="bg-[#008000]" arrow={GREEN} />
        <FlowBar fill="bg-[#ff0000]" arrow={RED} />
      </div>
      <div className="h-[158px] border-t-2 border-[#808080] pt-[3px]">
        {turnover.map((row) => (
          <QuoteRow key={row[1]} row={row} />
        ))}
      </div>
      <div className="h-[462px] border-t-2 border-[#808080] pt-[3px]">
        {quotes.map((row) => (
          <QuoteRow key={row[1]} row={row} />
        ))}
      </div>
      <div className="flex h-11 items-center border-t-2 border-[#808080] pr-1 pl-[3px] text-[32px] leading-none">
        <span className="font-light">涨家数</span>
        <b className="ml-auto text-[27px] font-bold text-[#ff0000]">445</b>
        <span className="ml-3 font-light">跌家数</span>
        <b className="ml-[122px] text-[27px] font-bold tracking-[0.5px] text-[#008000]">1864</b>
      </div>
      <div className="flex h-[42px] items-center border-t-2 border-[#808080] pl-[2px] text-2xl leading-none">上证指数</div>
      <IntradayChart />
    </aside>
  );
}

function Callout() {
  return (
    <div className="absolute left-[2133px] top-[134px] h-[246px] w-[613px] rounded-[22px] border-4 border-[#ff0000] bg-[#ffffcc] px-[24px] pt-[14px] font-['Noto_Sans','Noto_Sans_CJK_SC',sans-serif] text-[53px] leading-[70.500px] font-bold whitespace-nowrap">
      <div className="h-[70px]">上证<span className="text-[56px] leading-none tracking-[1.500px]">2026-04-02</span>留影</div>
      <div className="h-[71px]">昨日预设今中线<span className="text-[56px] leading-none tracking-[0.3px] text-[#0080ff]">3948</span>点</div>
      <div className="h-[70px]">今日实际最高点<span className="text-[56px] leading-none tracking-[0.3px] text-[#ff0000]">3952</span>点</div>
    </div>
  );
}

function Arrow({ x1, y1, x2, y2 }) {
  const angle = (Math.atan2(y2 - y1, x2 - x1) * 180) / Math.PI;
  const head = 'M0 0L-31 -11L-23 0L-31 11Z';
  return (
    <g fill="#0000ff">
      <line x1={x1} y1={y1} x2={x2} y2={y2} stroke="#0000ff" strokeWidth="4" strokeDasharray={`0 15 ${Math.hypot(x2 - x1, y2 - y1) - 30} 99`} />
      <path d={head} transform={`translate(${x2} ${y2}) rotate(${angle})`} />
      <path d={head} transform={`translate(${x1} ${y1}) rotate(${angle + 180})`} />
    </g>
  );
}

function Annotations() {
  return (
    <svg className="pointer-events-none absolute -left-1 -top-1" width="3080" height="1826" viewBox="0 0 3080 1826">
      <path d="M2261 380L2290.500 824L2327 380" fill="#ffffcc" stroke={RED} strokeWidth="4.500" strokeLinejoin="bevel" />
      <rect x="2263.500" y="374" width="61.500" height="9" fill="#ffffcc" />
      <Arrow x1={2287} y1={832} x2={2963} y2={572} />
      <Arrow x1={2289} y1={999} x2={2956} y2={610} />
      <Arrow x1={2288.500} y1={997} x2={2287.500} y2={1550} />
    </svg>
  );
}

function Moon({ className }) {
  return (
    <svg className={className} viewBox="0 0 29 32" preserveAspectRatio="none">
      <path d="M12 0C24 2 29 10 28.500 17C28 27 20 32 12 32C7 32 2 30 0 27C8 28 17 25 19 17C20.500 10 17 4 12 0Z" fill="#a800ff" />
    </svg>
  );
}

function Punctuation({ className }) {
  return (
    <svg className={className} viewBox="0 0 22 34">
      <circle cx="7" cy="7" r="5.500" fill="none" stroke="#a800ff" strokeWidth="2.500" />
      <path d="M13 20a4 4 0 1 1 8 1q-1 8-7 12l-1-1q4-4 4-8q-4 0-4-4z" fill="#a800ff" />
    </svg>
  );
}

function Keyboard() {
  return (
    <svg className="ml-4 shrink-0" width="37" height="23" viewBox="0 0 37 23" shapeRendering="crispEdges">
      <path d="M1 1h35v21H1z" fill="none" stroke="#a800ff" strokeWidth="2" />
      <path d="M5 6h28M5 12h28" stroke="#a800ff" strokeWidth="4" strokeDasharray="4 2" />
      <path d="M5 19h4M11 19h15M28 19h5" stroke="#a800ff" strokeWidth="5" />
    </svg>
  );
}

function ImeBar() {
  return (
    <div className="absolute left-[115px] top-[1754px] flex h-[57px] w-[388px] items-center border-2 border-[#dcc8ec] bg-white pl-2.5 pb-px text-[#a800ff] leading-none">
      <span className="scale-y-130 text-[26px]">中</span>
      <span className="ml-2 scale-y-75 text-[39px] font-medium">天然码</span>
      <Moon className="ml-2.5 h-8 w-[29px] shrink-0" />
      <Punctuation className="ml-3 h-[34px] w-[22px] shrink-0" />
      <span className="ml-2 text-[31px]">句</span>
      <span className="ml-2 text-[30px]">网</span>
      <Keyboard />
    </div>
  );
}

function SmallImeBar() {
  return (
    <div className="absolute left-[2923px] top-[1783px] flex h-[29px] w-[149px] items-center overflow-hidden border-2 border-r-0 border-[#dcc8ec] bg-white pl-1.5 whitespace-nowrap text-[#a800ff] leading-none">
      <span className="w-[18px] scale-y-120 text-[15px]">英</span>
      <span className="scale-y-75 text-[19.500px] font-medium">天然码</span>
      <Moon className="ml-1.5 h-4 w-[15px] shrink-0" />
      <Punctuation className="ml-1.5 h-[17px] w-[11px] shrink-0" />
      <span className="ml-1 text-base">句</span>
      <span className="ml-1 text-base">网</span>
    </div>
  );
}

export default function App() {
  return (
    <div className="relative h-[1826px] w-[3080px] overflow-hidden border-4 border-[#ff0000] bg-white font-['Liberation_Sans','Noto_Sans_CJK_SC',sans-serif] text-black">
      <div className="flex h-[1818px] border-y-2 border-[#808080]">
        <div className="relative flex w-[2388px] shrink-0 flex-col">
          <ChartHeader />
          <PriceChart />
          <div className="h-[2px] bg-[#808080]" />
          <VolumeHeader />
          <VolumeChart />
          <div className="h-[2px] bg-[#808080]" />
          <TimeAxis />
          <div className="h-[2px] bg-[#808080]" />
          <IndicatorTabs />
          <div className="absolute right-1.5 top-2 flex items-center gap-3.5">
            <svg width="22" height="24" viewBox="0 0 22 24">
              <path d="M11 2L21 12L11 22L1 12Z" fill="none" stroke="#606060" strokeWidth="1.500" />
            </svg>
            <svg width="24" height="22" viewBox="0 0 24 22">
              <rect x="1" y="1" width="22" height="20" rx="3" fill="none" stroke={GRAY} strokeWidth="2" />
              <rect x="14" y="4" width="6" height="14" fill="#707070" />
            </svg>
          </div>
        </div>
        <div className="flex w-[104px] shrink-0 flex-col border-x-2 border-[#808080]">
          <PriceAxis />
          <div className="-mx-[2px]">
            <VolumeAxis />
          </div>
          <div className="flex h-8 items-center justify-center border-b-2 border-[#808080] pr-1 text-2xl leading-none">日线</div>
          <div className="flex h-8 text-2xl leading-none">
            <div className="flex w-[50px] items-center justify-center border-r-2 border-[#808080]">+</div>
            <div className="flex flex-1 items-center justify-center">−</div>
          </div>
        </div>
        <SidePanel />
      </div>
      <div className="absolute left-[2925px] top-[11px] text-[34px] leading-[40px] font-bold text-white/90 [-webkit-text-stroke:1px_#808080]">
        股海明灯
      </div>
      <Callout />
      <Annotations />
      <ImeBar />
      <SmallImeBar />
    </div>
  );
}
